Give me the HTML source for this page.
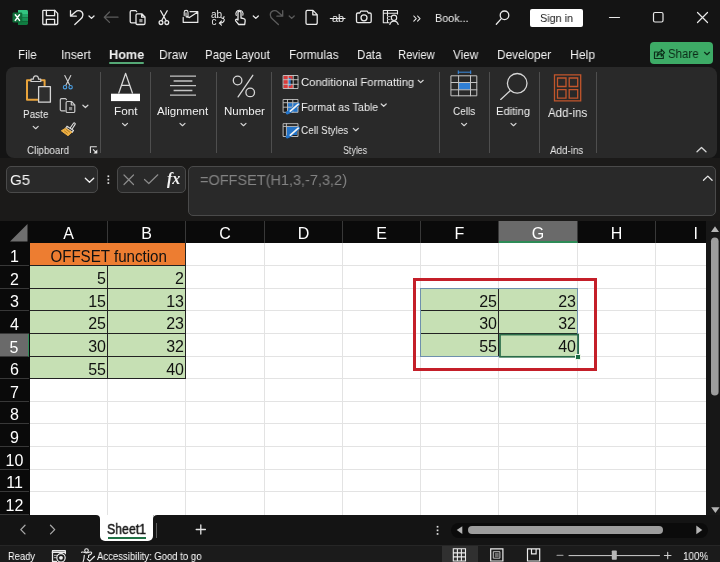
<!DOCTYPE html>
<html lang="en">
<head>
<meta charset="utf-8">
<title>Excel - OFFSET function</title>
<style>
*{box-sizing:border-box;margin:0;padding:0}
html,body{width:720px;height:562px;overflow:hidden;background:#141414}
body{position:relative;font-family:"Liberation Sans",sans-serif;color:#fff;font-size:13px}
.a{position:absolute}
.t{position:absolute;white-space:nowrap;line-height:1;transform-origin:0 50%;will-change:transform}
svg{position:absolute;overflow:visible}
/* title */
#title{left:0;top:0;width:720px;height:36px;background:#141414}
#tabs{left:0;top:36px;width:720px;height:31px;background:#141414}
.tab{font-size:13px;top:12px;color:#f2f2f2}
#ribbon{left:5.500px;top:67px;width:711.500px;height:91px;background:#292929;border-radius:8px}
.sep{position:absolute;top:5px;width:1px;height:81px;background:#4e4e4e}
.rl{font-size:11.5px;color:#f0f0f0}
.gl{font-size:11px;color:#e6e6e6;top:78px}
/* formula */
#fbar{left:0;top:158px;width:720px;height:63px;background:#1b1a19}
.box{position:absolute;background:#292929;border:1px solid #4a4a4a;border-radius:5px}
/* grid */
#grid{left:0;top:221px;width:720px;height:294px;background:#0a0a0a}
#cells{left:30px;top:22px;width:676px;height:272px;background:#fff}
.ch{position:absolute;top:0;height:22px;color:#fff;font-size:16px;text-align:center;line-height:26px;border-right:1px solid #383838}
.rh{position:absolute;left:0;width:29px;color:#fff;font-size:16px;text-align:center;border-bottom:1px solid #383838}
.ch,.rh,.c{will-change:transform}
.ch.sel{background:#6a6a6a;border-bottom:2px solid #2e8b57}
.rh.sel{background:#6a6a6a;border-right:1px solid #2e8b57}
.vl{position:absolute;top:0;width:1px;height:272px;background:#e3e3e3}
.hl{position:absolute;left:0;height:1px;width:676px;background:#e3e3e3}
.c{position:absolute;background:#c6e0b4;color:#111;font-size:16px;text-align:right;padding-right:1px;border-right:1px solid #222;border-bottom:1px solid #222}
#sheetbar{left:0;top:515px;width:720px;height:30px;background:#141414}
#status{left:0;top:545px;width:720px;height:17px;background:#1b1b1b;font-size:10.5px;border-top:1px solid #262626}
</style>
</head>
<body>

<!-- TITLE BAR -->
<div id="title" class="a">
  <svg style="left:0;top:0;will-change:transform" width="720" height="36" viewBox="0 0 720 36" fill="none" stroke="#e9e9e9" stroke-width="1.3" stroke-linecap="round" stroke-linejoin="round">
    <!-- excel logo -->
    <g stroke="none">
      <path d="M18 10h8.6a1.4 1.4 0 0 1 1.4 1.4V14H18z" fill="#33c481"/>
      <rect x="18" y="14" width="10" height="3.6" fill="#21a366"/>
      <rect x="18" y="17.6" width="10" height="3.6" fill="#169154"/>
      <path d="M18 21.2h10v2.4a1.4 1.4 0 0 1-1.4 1.4H18z" fill="#107c41"/>
      <rect x="12.5" y="12.5" width="9.8" height="10" rx="1.2" fill="#0f6f3a"/>
      <path d="M15.3 14.8l4.2 5.6M19.5 14.8l-4.2 5.6" stroke="#fff" stroke-width="1.5"/>
    </g>
    <!-- save -->
    <path d="M43.6 10.3h11l3.100 3.100v10.300a.8.800 0 0 1-.8.800H43.600a.8.800 0 0 1-.8-.8V11.100a.8.800 0 0 1 .8-.8z"/>
    <path d="M46.4 10.5v5.2h8.2v-5.2M46.4 24.2v-4.8h8.2v4.8"/>
    <!-- undo -->
    <path d="M70.5 10.6v5.6h5.8M70.7 16l4.6-4.1c3-2.6 7.6-1 7.6 3 0 2.200-1.200 3.300-2.700 4.700l-5.400 5"/>
    <path d="M89 16l2.500 2.400 2.500-2.400"/>
    <!-- back arrow (disabled) -->
    <path d="M118 17.200h-13.500M109.500 12l-5.200 5.200 5.200 5.200" stroke="#5c5c5c"/>
    <!-- copy -->
    <path d="M135.800 22.800h-4.300a1.300 1.300 0 0 1-1.300-1.300v-9.600a1.300 1.300 0 0 1 1.300-1.300h4.200l1 1"/>
    <path d="M137.300 13.800h4.500l3.200 3.200v6.200a1.300 1.300 0 0 1-1.300 1.300h-6.400a1.300 1.300 0 0 1-1.300-1.300v-8.100a1.300 1.300 0 0 1 1.300-1.300zM141.600 14v3.200h3.200"/>
    <rect x="139.300" y="19" width="3.200" height="3.200" fill="#9a9a9a" stroke="none"/>
    <!-- scissors -->
    <path d="M160.600 10.800l5.600 10M167.200 10.800l-5.600 10"/>
    <circle cx="161" cy="22.600" r="1.900"/><circle cx="166.800" cy="22.600" r="1.900"/>
    <!-- mail attach -->
    <path d="M190 11.600h7.800v10.800h-14.600v-5M197.400 12.200l-8 5.400-2.200-1.100" stroke-width="1.200"/>
    <path d="M184.200 15.600v-3.300a1.900 1.900 0 0 1 3.800 0v3.800a1 1 0 0 1-2 0v-3.400" stroke-width="1.100"/>
    <!-- abc replace -->
    <g stroke="none" fill="#e9e9e9" font-family="Liberation Sans, sans-serif" font-size="10"><text x="211" y="17.500">ab</text><text x="211.500" y="24.800">c</text></g>
    <path d="M224.300 19.500c0 2.500-1.500 3.600-4.800 3.600M221.500 21l-2.200 2.100 2.200 2.100M224 16.500l-.5 2.200-2-1" stroke-width="1.100"/>
    <!-- touch -->
    <path d="M238 20v-7.200a1.500 1.500 0 0 1 3 0v5.200l2.800.7c1 .3 1.500 1 1.400 2l-.5 3.800h-6l-3-3.700c-.6-1 .6-2 1.500-1.200z"/>
    <path d="M236.300 15.500a3.600 3.600 0 1 1 6.500-.3" stroke-width="1.100"/>
    <path d="M253.300 16l2.500 2.400 2.500-2.400"/>
    <!-- redo disabled -->
    <path d="M282.700 10.600v5.600h-5.800M282.500 16l-4.600-4.100c-3-2.600-7.600-1-7.600 3 0 2.200 1.200 3.300 2.700 4.700l5.400 5" stroke="#5c5c5c"/>
    <path d="M289.200 16l2.500 2.400 2.500-2.400" stroke="#5c5c5c"/>
    <!-- new file -->
    <path d="M307.300 10.400h5.700l4.200 4.200v8.500a1.300 1.300 0 0 1-1.300 1.300h-8.600a1.300 1.300 0 0 1-1.300-1.300V11.700a1.300 1.300 0 0 1 1.300-1.300zM312.800 10.600v4.200h4.200"/>
    <!-- strikethrough -->
    <g stroke="none" fill="#e9e9e9" font-family="Liberation Sans, sans-serif" font-size="11"><text x="332" y="21.500">ab</text></g>
    <path d="M330.300 18.500h14.700" stroke-width="1.100"/>
    <!-- camera -->
    <path d="M357.800 13h2l1-1.800h6.500l1 1.800h1.600a1.300 1.300 0 0 1 1.300 1.300v7a1.300 1.300 0 0 1-1.300 1.300h-12.100a1.300 1.300 0 0 1-1.300-1.300v-7a1.300 1.300 0 0 1 1.300-1.300z"/>
    <circle cx="364" cy="17.800" r="3"/>
    <!-- table person -->
    <path d="M389 22.800h-5.700v-12.300h14.200v3.500M383.300 13.300h14.200M387.500 10.500v12.300" stroke-width="1.100"/>
    <path d="M387.500 16.500h3M387.500 19.500h2.500" stroke="#9a9a9a" stroke-width="1"/>
    <circle cx="394" cy="17.800" r="2.700" stroke-width="1.100"/>
    <path d="M389.800 24.500c.6-2.300 2.200-3.400 4.200-3.400s3.600 1.100 4.200 3.400" stroke-width="1.100"/>
    <!-- chevrons >> -->
    <path d="M413.800 16l2.400 2.600-2.400 2.600M417.600 16l2.400 2.600-2.400 2.600" stroke-width="1.100"/>
    <!-- search -->
    <circle cx="504.500" cy="15.300" r="4.300"/><path d="M501.300 18.600l-5 5.600"/>
    <!-- window controls -->
    <path d="M609.500 17.500h10" stroke-width="1.200"/>
    <rect x="653.500" y="12.500" width="9.500" height="9.500" rx="1.500" stroke-width="1.200"/>
    <path d="M697.500 12.500l10 10M707.500 12.500l-10 10" stroke-width="1.200"/>
  </svg>
    <div class="t" style="left:434.9px;top:12.800px;font-size:11.500px;color:#f0f0f0;transform:scaleX(0.939)">Book...</div>
  <div class="a" style="left:530px;top:9px;width:53px;height:18px;background:#fff;border-radius:2px"></div>
  <div class="t" style="left:540.4px;top:12.500px;font-size:11.500px;color:#1a1a1a;transform:scaleX(0.942)">Sign in</div>
</div>

<!-- TABS -->
<div id="tabs" class="a">
  <div class="t tab" style="left:18.3px;transform:scaleX(0.886)">File</div>
  <div class="t tab" style="left:60.8px;transform:scaleX(0.916)">Insert</div>
  <div class="t tab" style="left:108.7px;font-weight:bold;transform:scaleX(0.974)">Home</div>
  <div class="a" style="left:109.200px;top:26px;width:34.500px;height:2px;background:#55a976;border-radius:1px"></div>
  <div class="t tab" style="left:159.4px;transform:scaleX(0.926)">Draw</div>
  <div class="t tab" style="left:205.3px;transform:scaleX(0.887)">Page Layout</div>
  <div class="t tab" style="left:289.0px;transform:scaleX(0.915)">Formulas</div>
  <div class="t tab" style="left:356.5px;transform:scaleX(0.895)">Data</div>
  <div class="t tab" style="left:398.3px;transform:scaleX(0.862)">Review</div>
  <div class="t tab" style="left:453.3px;transform:scaleX(0.905)">View</div>
  <div class="t tab" style="left:497.0px;transform:scaleX(0.913)">Developer</div>
  <div class="t tab" style="left:569.9px;transform:scaleX(0.939)">Help</div>
  <div class="a" style="left:649.800px;top:6px;width:63.500px;height:22px;background:#3dab66;border-radius:4px"></div>
  <svg style="left:0;top:0" width="720" height="31" viewBox="0 36 720 31" fill="none" stroke="#0c2f1a" stroke-width="1.200" stroke-linecap="round" stroke-linejoin="round">
    <path d="M657.500 52h-3v6.500h8.800v-2.800M657 56.300c.300-3 2-4.600 4.300-4.600v-2.300l3.200 3.300-3.200 3.300v-2.300c-1.800 0-3.200.700-4.300 2.600z"/>
    <path d="M704.500 52.300l2.500 2.400 2.500-2.400"/>
  </svg>
  <div class="t" style="left:668.2px;top:12px;font-size:12.500px;color:#0c2a17;transform:scaleX(0.917)">Share</div>
</div>

<!-- RIBBON -->
<div id="ribbon" class="a">
  <div class="sep" style="left:94.5px"></div>
  <div class="sep" style="left:144.5px"></div>
  <div class="sep" style="left:210.5px"></div>
  <div class="sep" style="left:265.5px"></div>
  <div class="sep" style="left:433.5px"></div>
  <div class="sep" style="left:483.5px"></div>
  <div class="sep" style="left:533.5px"></div>
  <div class="sep" style="left:590.5px"></div>
  <div class="t rl" style="left:17.8px;top:42px;transform:scaleX(0.868)">Paste</div>
  <div class="t gl" style="left:21.0px;transform:scaleX(0.893)">Clipboard</div>
  <div class="t rl" style="left:108.4px;top:39px;transform:scaleX(1.022)">Font</div>
  <div class="t rl" style="left:151.9px;top:39px;transform:scaleX(1.001)">Alignment</div>
  <div class="t rl" style="left:218.4px;top:39px;transform:scaleX(0.990)">Number</div>
  <div class="t rl" style="left:295.7px;top:10px;transform:scaleX(0.978)">Conditional Formatting</div>
  <div class="t rl" style="left:295.7px;top:34.5px;transform:scaleX(0.940)">Format as Table</div>
  <div class="t rl" style="left:295.8px;top:57.5px;transform:scaleX(0.870)">Cell Styles</div>
  <div class="t gl" style="left:337.8px;transform:scaleX(0.806)">Styles</div>
  <div class="t rl" style="left:447.8px;top:39px;transform:scaleX(0.870)">Cells</div>
  <div class="t rl" style="left:490.9px;top:39px;transform:scaleX(0.971)">Editing</div>
  <div class="t rl" style="left:542.2px;top:40px;font-size:12.5px;transform:scaleX(0.923)">Add-ins</div>
  <div class="t gl" style="left:544.8px;transform:scaleX(0.892)">Add-ins</div>
</div>


<!-- RIBBON ICONS (page coordinates) -->
<svg id="ricons" style="left:0;top:0" width="720" height="562" viewBox="0 0 720 562" fill="none" stroke="#d6d6d6" stroke-width="1.2" stroke-linecap="round" stroke-linejoin="round">
  <!-- paste -->
  <path d="M37.500 99.800H27V80.300h17.600v5.500" stroke="#e9a43c" stroke-width="2"/>
  <path d="M31 81.500v-2.300h2.300c0-4.500 5.200-4.500 5.200 0h2.300v2.300z" stroke="#d0d0d0" fill="#292929"/>
  <rect x="38.600" y="86.600" width="11.800" height="15.600" fill="#2e2e2e" stroke="#d6d6d6" stroke-width="1.300"/>
  <path d="M33.200 126.400l2.500 2.300 2.500-2.300"/>
  <!-- cut -->
  <path d="M64.800 75.500l4.800 9.600M70.800 75.500l-4.800 9.600" stroke="#d0d0d0" stroke-width="1.100"/>
  <circle cx="65" cy="87.200" r="1.700" stroke="#4b9fe3" stroke-width="1.100"/><circle cx="70.600" cy="87.200" r="1.700" stroke="#4b9fe3" stroke-width="1.100"/>
  <!-- copy -->
  <path d="M65 110.800h-3.500a1.200 1.200 0 0 1-1.200-1.200v-9.800a1.200 1.200 0 0 1 1.200-1.200h4l1 1" stroke="#c8c8c8"/>
  <path d="M67.300 101.500h4.200l3.300 3.300v6.500a1.200 1.200 0 0 1-1.200 1.200h-6.300a1.200 1.200 0 0 1-1.200-1.200v-8.600a1.200 1.200 0 0 1 1.200-1.200zM71.300 101.700v3.300h3.300" stroke="#c8c8c8"/>
  <rect x="69" y="107" width="3.200" height="3.200" fill="#8a8a8a" stroke="none"/>
  <path d="M82.900 105.200l2.500 2.300 2.500-2.300"/>
  <!-- format painter -->
  <path d="M70.500 127.500l3-4.200c.7-1 2.300.1 1.600 1.100l-2.800 4.300" stroke="#e0e0e0" stroke-width="1.100"/>
  <path d="M67 126.200l6.500 4.300-1.200 1.800-6.500-4.300z" stroke="#e0e0e0" stroke-width="1.100"/>
  <path d="M65.200 128.400l-3.900 2.400 6.700 4.900 3.700-3.300z" fill="#eeb043" stroke="#eeb043" stroke-width="1"/>
  <path d="M64.500 131l3 2.200M66.500 129.800l3 2.200" stroke="#a8731f" stroke-width=".8"/>
  <!-- dialog launcher -->
  <path d="M96.800 146.700h-6.400v6.300M93 149.300l2.800 2.800" stroke="#e0e0e0" stroke-width="1.100" stroke-linecap="butt"/><path d="M97.300 149.600v3.900h-3.900z" fill="#e8e8e8" stroke="none"/>
  <!-- font -->
  <path d="M118.800 93l6.800-19.600 6.800 19.600M121.400 85.400h8.400" stroke="#d8d8d8" stroke-width="1.300"/>
  <rect x="111" y="93.700" width="29" height="7.400" fill="#fff" stroke="none"/>
  <path d="M122.500 123.400l2.500 2.300 2.500-2.300"/>
  <!-- alignment -->
  <path d="M170 76.200h26M173.600 81h18.800M170 85.700h26M173.600 90.500h18.800M170 95.200h26" stroke="#c4c4c4" stroke-width="1.300" stroke-linecap="butt"/>
  <path d="M180 123.400l2.500 2.300 2.500-2.300"/>
  <!-- number -->
  <circle cx="237.600" cy="80.500" r="4.300" stroke-width="1.300"/><circle cx="250.200" cy="92.400" r="4.300" stroke-width="1.300"/>
  <path d="M252.800 75.300l-14.700 21.600" stroke-width="1.300"/>
  <path d="M241 123.400l2.500 2.300 2.500-2.300"/>
  <!-- conditional formatting -->
  <g stroke="none">
    <rect x="283.500" y="75.500" width="14.500" height="13" fill="#1d1d1d"/>
    <rect x="283.500" y="75.500" width="9" height="4" fill="#d83b3b"/>
    <rect x="283.500" y="79.500" width="4.500" height="5" fill="#d83b3b"/>
    <rect x="283.500" y="84.500" width="9.500" height="4" fill="#d83b3b"/>
    <rect x="288.300" y="78" width="2.400" height="8" fill="#2f7fd6"/>
  </g>
  <path d="M283.500 75.500h14.500v13h-14.500zM283.500 79.700h14.500M283.500 84.300h14.500M288.200 75.500v13M293.200 75.500v13" stroke="#c9c9c9" stroke-width=".9"/>
  <path d="M418.200 80.300l2.500 2.300 2.500-2.300"/>
  <!-- format as table -->
  <g stroke="none">
    <rect x="283.500" y="99.500" width="14.500" height="12.800" fill="#1c1c1c"/>
    <rect x="287.700" y="102.800" width="10.300" height="9.500" fill="#2474c8"/>
  </g>
  <path d="M283.500 99.500h14.500v12.800h-14.500zM283.500 102.700h14.500M283.500 107.200h14.500M287.500 99.500v12.800M292.800 99.500v12.800" stroke="#c2c2c2" stroke-width=".9"/>
  <path d="M298.300 104.200l-8.300 7.300-2.600 1.200" stroke="#2474c8" stroke-width="3.400"/>
  <path d="M298.300 104.200l-8 7" stroke="#f4f4f4" stroke-width="1.700"/>
  <path d="M381.200 104l2.500 2.300 2.500-2.300"/>
  <!-- cell styles -->
  <g stroke="none">
    <rect x="283.500" y="123.700" width="14.500" height="12.800" fill="#1c1c1c"/>
    <rect x="286.600" y="126.600" width="10.400" height="8.400" fill="#2474c8"/>
  </g>
  <path d="M283.500 123.700h14.500v12.800h-14.500zM283.500 126.400h14.500M286.400 123.700v12.800" stroke="#c8c8c8" stroke-width=".9"/>
  <path d="M298.300 128.200l-8.300 7.300-2.600 1.200" stroke="#2474c8" stroke-width="3.400"/>
  <path d="M298.300 128.200l-8 7" stroke="#f4f4f4" stroke-width="1.700"/>
  <path d="M353.300 128.400l2.500 2.300 2.500-2.300"/>
  <!-- cells -->
  <rect x="458.800" y="82.700" width="11.600" height="7" fill="#2f7fd6" stroke="none"/>
  <path d="M451.300 75.800h25.500v20h-25.500zM451.300 82.500h25.500M451.300 89.800h25.500M458.600 75.800v20M470.500 75.800v20" stroke="#c4c4c4" stroke-width="1"/>
  <path d="M458.300 72.200h12.400M458.300 70.800v2.800M470.700 70.800v2.800" stroke="#3b8be0" stroke-width="1"/>
  <path d="M461.600 123.400l2.500 2.300 2.500-2.300"/>
  <!-- editing -->
  <circle cx="517.200" cy="83.300" r="9.800" stroke-width="1.300"/><path d="M510.200 90.800l-9.500 8.600" stroke-width="1.300"/>
  <path d="M511 123.400l2.500 2.300 2.500-2.300"/>
  <!-- add-ins -->
  <path d="M554.500 74.800h26.200v26h-26.200zM557.500 78h8.500v8.500h-8.500zM569.200 78h8.500v8.500h-8.500zM557.500 89.600h8.500v8.500h-8.500zM569.200 89.600h8.500v8.500h-8.500z" stroke="#c2562c" stroke-width="1.300" stroke-linejoin="miter"/>
  <!-- collapse -->
  <path d="M697 151.800l4.500-4.300 4.500 4.300" stroke-width="1.300"/>
</svg>

<!-- FORMULA BAR -->
<div id="fbar" class="a">
  <div class="box" style="left:6px;top:8px;width:92px;height:27px"></div>
  <div class="t" style="left:9.9px;top:13.5px;font-size:15.5px;color:#f4f4f4;transform:scaleX(0.975)">G5</div>
  <div class="box" style="left:117px;top:8px;width:69px;height:27px"></div>
  <div class="box" style="left:188px;top:8px;width:528px;height:50px"></div>
  <div class="t" style="left:199.9px;top:14px;font-size:15px;color:#838383;transform:scaleX(0.966)">=OFFSET(H1,3,-7,3,2)</div>
  <svg style="left:0;top:0" width="720" height="63" viewBox="0 158 720 63" fill="none" stroke="#8c8c8c" stroke-width="1.200" stroke-linecap="round" stroke-linejoin="round">
    <path d="M85.300 178.200l4.200 4 4.200-4" stroke="#f0f0f0" stroke-width="1.300"/>
    <g fill="#e0e0e0" stroke="none"><rect x="107.500" y="175.400" width="1.700" height="1.700"/><rect x="107.500" y="178.800" width="1.700" height="1.700"/><rect x="107.500" y="182.200" width="1.700" height="1.700"/></g>
    <path d="M124 175l9.500 9.500M133.500 175l-9.500 9.500"/>
    <path d="M144.500 179.500l4.300 4 9-8.700"/>
    <path d="M703.500 180.300l4.300-4.200 4.300 4.200" stroke="#e6e6e6" stroke-width="1.300"/>
  </svg>
  <div class="t" style="left:167px;top:13px;font-family:'Liberation Serif',serif;font-style:italic;font-weight:bold;font-size:16px;color:#f2f2f2;letter-spacing:-.2px">fx</div>
</div>

<!-- GRID -->
<div id="grid" class="a">
  <svg style="left:0;top:0" width="30" height="22" viewBox="0 0 30 22"><path d="M10 20.5 L27.5 3 L27.5 20.5 Z" fill="#6f6f6f"/></svg>
  <div class="ch" style="left:30px;width:78px">A</div>
  <div class="ch" style="left:108px;width:78px">B</div>
  <div class="ch" style="left:186px;width:79px">C</div>
  <div class="ch" style="left:265px;width:78px">D</div>
  <div class="ch" style="left:343px;width:78px">E</div>
  <div class="ch" style="left:421px;width:78px">F</div>
  <div class="ch sel" style="left:499px;width:79px">G</div>
  <div class="ch" style="left:578px;width:78px">H</div>
  <div class="ch" style="left:656px;width:50px;border-right:0;text-align:left;padding-left:37.500px">I</div>
  <div class="rh" style="top:22px;height:23px;line-height:27px">1</div>
  <div class="rh" style="top:45px;height:23px;line-height:27px">2</div>
  <div class="rh" style="top:68px;height:22px;line-height:26px">3</div>
  <div class="rh" style="top:90px;height:23px;line-height:27px">4</div>
  <div class="rh sel" style="top:113px;height:23px;line-height:27px">5</div>
  <div class="rh" style="top:136px;height:22px;line-height:26px">6</div>
  <div class="rh" style="top:158px;height:23px;line-height:27px">7</div>
  <div class="rh" style="top:181px;height:22px;line-height:26px">8</div>
  <div class="rh" style="top:203px;height:23px;line-height:27px">9</div>
  <div class="rh" style="top:226px;height:23px;line-height:27px">10</div>
  <div class="rh" style="top:249px;height:22px;line-height:26px">11</div>
  <div class="rh" style="top:271px;height:23px;line-height:27px">12</div>
  <div id="cells" class="a">
  <div class="vl" style="left:77px"></div>
  <div class="vl" style="left:155px"></div>
  <div class="vl" style="left:234px"></div>
  <div class="vl" style="left:312px"></div>
  <div class="vl" style="left:390px"></div>
  <div class="vl" style="left:468px"></div>
  <div class="vl" style="left:547px"></div>
  <div class="vl" style="left:625px"></div>
  <div class="hl" style="top:22px"></div>
  <div class="hl" style="top:45px"></div>
  <div class="hl" style="top:67px"></div>
  <div class="hl" style="top:90px"></div>
  <div class="hl" style="top:113px"></div>
  <div class="hl" style="top:135px"></div>
  <div class="hl" style="top:158px"></div>
  <div class="hl" style="top:180px"></div>
  <div class="hl" style="top:203px"></div>
  <div class="hl" style="top:226px"></div>
  <div class="hl" style="top:248px"></div>
  <div class="c" style="left:0;top:0;width:156px;height:23px;line-height:27px;background:#ed7d31;text-align:center;padding:0 0 0 2px"><span style="display:inline-block;transform:scaleX(.945)">OFFSET function</span></div>
  <div class="c" style="left:0px;top:23px;width:78px;height:23px;line-height:26px">5</div>
  <div class="c" style="left:78px;top:23px;width:78px;height:23px;line-height:26px">2</div>
  <div class="c" style="left:0px;top:46px;width:78px;height:22px;line-height:25px">15</div>
  <div class="c" style="left:78px;top:46px;width:78px;height:22px;line-height:25px">13</div>
  <div class="c" style="left:0px;top:68px;width:78px;height:23px;line-height:26px">25</div>
  <div class="c" style="left:78px;top:68px;width:78px;height:23px;line-height:26px">23</div>
  <div class="c" style="left:0px;top:91px;width:78px;height:23px;line-height:26px">30</div>
  <div class="c" style="left:78px;top:91px;width:78px;height:23px;line-height:26px">32</div>
  <div class="c" style="left:0px;top:114px;width:78px;height:22px;line-height:25px">55</div>
  <div class="c" style="left:78px;top:114px;width:78px;height:22px;line-height:25px">40</div>
  <div class="c" style="left:391px;top:46px;width:78px;height:22px;line-height:25px">25</div>
  <div class="c" style="left:469px;top:46px;width:79px;height:22px;line-height:25px">23</div>
  <div class="c" style="left:391px;top:68px;width:78px;height:23px;line-height:26px">30</div>
  <div class="c" style="left:469px;top:68px;width:79px;height:23px;line-height:26px">32</div>
  <div class="c" style="left:391px;top:91px;width:78px;height:23px;line-height:26px">55</div>
  <div class="c" style="left:469px;top:91px;width:79px;height:23px;line-height:26px">40</div>
  <div class="a" style="left:390px;top:45px;width:158px;height:69px;border:1px solid #6e90ad"></div>
  <svg style="left:0;top:0" width="676" height="272" viewBox="30 243 676 272" fill="none"><rect x="500" y="334.600" width="78.200" height="22.200" stroke="#2a6c49" stroke-width="1.700"/></svg>
  <div class="a" style="left:545.800px;top:112px;width:3.800px;height:3.600px;background:#1b6a43;outline:1px solid #eef5ea"></div>
  <div class="a" style="left:383px;top:35px;width:184px;height:93px;border:3px solid #c41f29"></div>
  </div>
</div>

<!-- SHEET BAR -->
<div id="sheetbar" class="a">
  <div class="a" style="left:451px;top:7.500px;width:257px;height:15px;border-radius:7.500px;background:#0b0b0b"></div>
  <div class="a" style="left:467.500px;top:11px;width:195.500px;height:7.500px;border-radius:4px;background:#9d9d9d"></div>
  <div class="a" style="left:100px;top:0;width:53.300px;height:26.300px;background:#fff;border-radius:0 0 5px 5px"></div>
  <div class="t" style="left:107.2px;top:6.500px;font-size:14px;color:#1a1a1a;-webkit-text-stroke:.45px #1a1a1a;transform:scaleX(0.880)">Sheet1</div>
  <div class="a" style="left:107.700px;top:22px;width:38px;height:2px;background:#1f7145"></div>
  <div class="a" style="left:156.300px;top:7.500px;width:1px;height:15.500px;background:#5c5c5c"></div>
  <svg style="left:0;top:0" width="720" height="29" viewBox="0 515 720 29" fill="none" stroke="#a8a8a8" stroke-width="1.300" stroke-linecap="round" stroke-linejoin="round">
    <path d="M25 525.300l-4.200 4.300 4.200 4.300M50.500 525.300l4.200 4.300-4.200 4.300"/>
    <path d="M196.200 529.500h9.200M200.800 524.900v9.200" stroke="#e4e4e4"/>
    <path d="M96 515Q100 515 100 519V515zM157.300 515Q153.300 515 153.300 519V515z" fill="#fff" stroke="none"/>
    <g fill="#e0e0e0" stroke="none"><rect x="436.700" y="525.900" width="1.700" height="1.700"/><rect x="436.700" y="529.500" width="1.700" height="1.700"/><rect x="436.700" y="533.100" width="1.700" height="1.700"/></g>
    <path d="M462.300 526.300v7.600l-5.600-3.800z" fill="#b4b4b4" stroke="none"/>
    <path d="M696.300 525.600v8.600l6-4.300z" fill="#b4b4b4" stroke="none"/>
  </svg>
</div>

<!-- STATUS BAR -->
<div id="status" class="a">
  <div class="a" style="left:442px;top:0;width:36px;height:16px;background:#303030"></div>
  <div class="t" style="left:7.8px;top:4.500px;transform:scaleX(0.892)">Ready</div>
  <div class="t" style="left:96.8px;top:4.500px;transform:scaleX(0.909)">Accessibility: Good to go</div>
  <div class="t" style="left:682.7px;top:4.500px;transform:scaleX(0.943)">100%</div>
  <svg style="left:0;top:-2px" width="720" height="18" viewBox="0 544 720 18" fill="none" stroke="#ececec" stroke-width="1.200" stroke-linecap="round" stroke-linejoin="round">
    <!-- macro record -->
    <path d="M56.500 561.400h-4v-10.700h12.800v3" stroke-width="1.300"/><path d="M52.500 552.300h12.800" stroke-width="1.600"/>
    <path d="M54.300 555.300h2.600M54.300 557.700h1.800" stroke="#bdbdbd" stroke-width="1"/>
    <circle cx="61" cy="557.800" r="4.200"/><circle cx="61" cy="557.800" r="1.900" fill="#ececec" stroke="none"/>
    <!-- accessibility -->
    <circle cx="86.500" cy="550.600" r="1.800" stroke-width="1.100"/>
    <path d="M81.600 552.300c1.500-1.200 2.600.700 4.900.700s3.400-1.900 4.900-.700c1 .9-.300 2.200-2.700 3l-.200 2.200M84.300 555.300c-.100 2.500-.200 4.300-1.300 6.800" stroke-width="1.100"/>
    <path d="M87.300 558.900l2.400 2.300 4.700-4.700" stroke-width="1.200"/>
    <!-- view buttons -->
    <path d="M453.300 548.800h12.200v12.200h-12.200zM453.300 552.900h12.200M453.300 556.900h12.200M457.400 548.800v12.200M461.400 548.800v12.200" stroke-width="1.100" stroke-linejoin="miter"/>
    <path d="M490.700 548.800h12.200v12.200h-12.200z" stroke-width="1.200" stroke-linejoin="miter"/><path d="M493.700 551.700h6.200v6.500h-6.200zM495.300 554h3M495.300 556h3" stroke-width=".9" stroke="#cfcfcf"/>
    <path d="M527.500 548.800h12.200v12.200h-12.200zM531.500 548.800v5h4.600v-5" stroke-width="1.200" stroke-linejoin="miter"/>
    <!-- zoom -->
    <path d="M557 555.300h6" stroke="#8d8d8d"/>
    <path d="M569 555.600h90.500" stroke="#cfcfcf" stroke-width="1"/>
    <rect x="611.800" y="550.500" width="5" height="9.300" rx=".8" fill="#b8b8b8" stroke="none"/>
    <path d="M664.400 555.500h6.600M667.700 552.200v6.600" stroke="#cfcfcf" stroke-width="1.100"/>
  </svg>
</div>

<!-- VERTICAL SCROLLBAR -->
<svg style="left:706px;top:221px" width="14" height="294" viewBox="706 221 14 294">
  <rect x="706" y="221" width="14" height="294" fill="#171717"/>
  <path d="M711 232l4-5.800 4 5.800z" fill="#b4b4b4"/>
  <rect x="711" y="237.500" width="7.600" height="158" rx="3.800" fill="#9d9d9d"/>
  <path d="M711.200 507.200l4.200 5.800 4.200-5.800z" fill="#b4b4b4"/>
</svg>

</body>
</html>
